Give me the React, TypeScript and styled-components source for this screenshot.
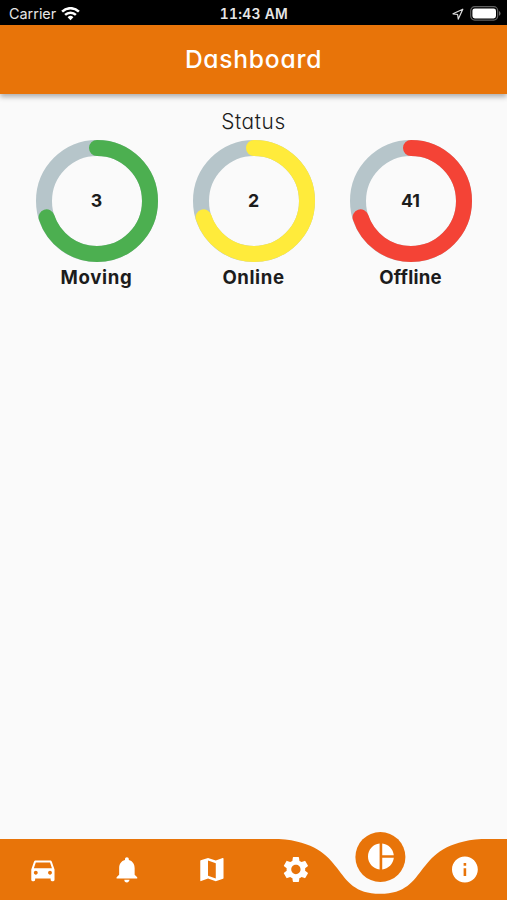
import React from 'react';
import styled, { createGlobalStyle } from 'styled-components';
import {
  MdDirectionsCar,
  MdInfo,
  MdMap,
  MdNotifications,
  MdPieChart,
  MdSettings,
} from 'react-icons/md';

const ORANGE = '#e87409';

const GlobalStyle = createGlobalStyle`
  * { box-sizing: border-box; }
  body { margin: 0; background: #fafafa; }
`;

const Screen = styled.div`
  display: flex;
  flex-direction: column;
  height: 100vh;
  min-height: 900px;
  overflow: hidden;
  background: #fafafa;
  font-family: Inter, sans-serif;
  font-feature-settings: 'cv11';
  color: #1c1c1c;
`;

const StatusBar = styled.div`
  flex: none;
  display: grid;
  grid-template-columns: 1fr auto 1fr;
  align-items: center;
  height: 25px;
  padding: 2px 6px 0 9px;
  background: #000;
  color: #e6e6e6;
  font-size: 14.4px;
  line-height: 20px;
  font-feature-settings: normal;
`;

const Carrier = styled.div`
  display: flex;
  align-items: center;
  gap: 5px;
`;

const Clock = styled.div`
  margin-right: 2px;
  font-size: 13.8px;
  font-weight: 600;
  letter-spacing: 0.3px;
  font-variant-numeric: tabular-nums;
`;

const Indicators = styled.div`
  display: flex;
  justify-content: flex-end;
  align-items: center;
  gap: 6px;
`;

const Header = styled.header`
  flex: none;
  height: 69px;
  display: flex;
  align-items: center;
  justify-content: center;
  padding-bottom: 2px;
  background: ${ORANGE};
  box-shadow: 0 3px 5px rgba(0, 0, 0, 0.3);
`;

const Title = styled.h1`
  margin: 0;
  color: #fff;
  font-size: 24.6px;
  line-height: 30px;
  font-weight: 500;
  letter-spacing: 0.75px;
`;

const Content = styled.main`
  flex: 1;
  padding: 14px 18.5px 0;
`;

const SectionTitle = styled.h2`
  margin: 0 0 4px;
  text-align: center;
  font-size: 20.8px;
  line-height: 28px;
  font-weight: 350;
  letter-spacing: 0.6px;
`;

const Gauges = styled.div`
  display: grid;
  grid-template-columns: repeat(3, 157px);
  justify-content: center;
`;

const GaugeCell = styled.div`
  display: flex;
  flex-direction: column;
  align-items: center;
`;

const Dial = styled.div`
  display: grid;
  place-items: center;
  width: 122px;
  height: 122px;

  > * { grid-area: 1 / 1; }
`;

const GaugeValue = styled.span`
  font-size: 17.8px;
  font-weight: 700;
  line-height: 24px;
`;

const GaugeLabel = styled.span<{ $tracking: number }>`
  margin-top: 2px;
  font-size: 18.6px;
  line-height: 26px;
  font-weight: 700;
  letter-spacing: ${({ $tracking }) => $tracking}px;
`;

const Nav = styled.nav`
  flex: none;
  position: relative;
  height: 61px;
`;

const NavShape = styled.svg`
  position: absolute;
  left: 0;
  top: 0;
`;

const NavItems = styled.div`
  position: relative;
  display: grid;
  grid-template-columns: repeat(6, 1fr);
  height: 61px;
`;

const NavButton = styled.button<{ $active?: boolean }>`
  justify-self: center;
  align-self: center;
  display: grid;
  place-items: center;
  width: 50px;
  height: 50px;
  padding: 0;
  border: 0;
  border-radius: 50%;
  color: #fff;
  background: ${({ $active }) => ($active ? ORANGE : 'transparent')};
  transform: translate(0.4px, ${({ $active }) => ($active ? '-13px' : '0')});
`;

const gauges = [
  { label: 'Moving', value: 3, color: '#4caf50', tracking: 0.7 },
  { label: 'Online', value: 2, color: '#ffeb3b', tracking: 0.6 },
  { label: 'Offline', value: 41, color: '#f44336', tracking: 0.2 },
];

const items = [
  { name: 'Vehicles', Icon: MdDirectionsCar },
  { name: 'Alerts', Icon: MdNotifications },
  { name: 'Map', Icon: MdMap },
  { name: 'Settings', Icon: MdSettings },
  { name: 'Dashboard', Icon: MdPieChart, active: true },
  { name: 'Info', Icon: MdInfo },
];

function Ring({ color }: { color: string }) {
  return (
    <svg width="122" height="122" viewBox="0 0 122 122" fill="none" strokeWidth="16">
      <circle cx="61" cy="61" r="53" stroke="#b6c5ca" />
      <circle
        cx="61"
        cy="61"
        r="53"
        stroke={color}
        strokeLinecap="round"
        pathLength={100}
        strokeDasharray="70 100"
        transform="rotate(-90 61 61)"
      />
    </svg>
  );
}

function WifiIcon() {
  return (
    <svg width="19" height="14" viewBox="0 0 19 14" fill="none" stroke="#fff" strokeWidth="2.5">
      <path d="M1.1 4.6a12 12 0 0 1 16.8 0" />
      <path d="M4.1 7.9a7.7 7.7 0 0 1 10.8 0" />
      <path d="M9.5 13.2 6.6 10.3a4.1 4.1 0 0 1 5.8 0Z" fill="#fff" stroke="none" />
    </svg>
  );
}

function LocationIcon() {
  return (
    <svg width="12" height="12" viewBox="0 0 12 12" fill="none" stroke="#ddd" strokeWidth="1.2" strokeLinejoin="round">
      <path d="M10.8 1.2 1 5.8l4.6.7.7 4.6Z" />
    </svg>
  );
}

function BatteryIcon() {
  return (
    <svg width="31" height="15" viewBox="0 0 31 15" fill="none">
      <rect x=".7" y=".7" width="27" height="13.4" rx="4" stroke="#606060" strokeWidth="1.2" />
      <rect x="2.4" y="2.4" width="23.6" height="10" rx="2.4" fill="#fff" />
      <path d="M29 5v4.8q1.5-.8 1.5-2.4T29 5Z" fill="#707070" />
    </svg>
  );
}

export default function App() {
  return (
    <Screen>
      <GlobalStyle />
      <StatusBar>
        <Carrier>
          Carrier
          <WifiIcon />
        </Carrier>
        <Clock>11:43 AM</Clock>
        <Indicators>
          <LocationIcon />
          <BatteryIcon />
        </Indicators>
      </StatusBar>
      <Header>
        <Title>Dashboard</Title>
      </Header>
      <Content>
        <SectionTitle>Status</SectionTitle>
        <Gauges>
          {gauges.map((g) => (
            <GaugeCell key={g.label}>
              <Dial>
                <Ring color={g.color} />
                <GaugeValue>{g.value}</GaugeValue>
              </Dial>
              <GaugeLabel $tracking={g.tracking}>{g.label}</GaugeLabel>
            </GaugeCell>
          ))}
        </Gauges>
      </Content>
      <Nav>
        <NavShape width="507" height="61" viewBox="0 0 507 61">
          <path
            d="M0 0H278.9C349.8 4.6 329.6 54.8 380.3 54.8C431 54.8 410.7 4.6 481.6 0H507V61H0Z"
            fill={ORANGE}
          />
        </NavShape>
        <NavItems>
          {items.map(({ name, Icon, active }) => (
            <NavButton key={name} $active={active} aria-label={name}>
              <Icon size={31} />
            </NavButton>
          ))}
        </NavItems>
      </Nav>
    </Screen>
  );
}
